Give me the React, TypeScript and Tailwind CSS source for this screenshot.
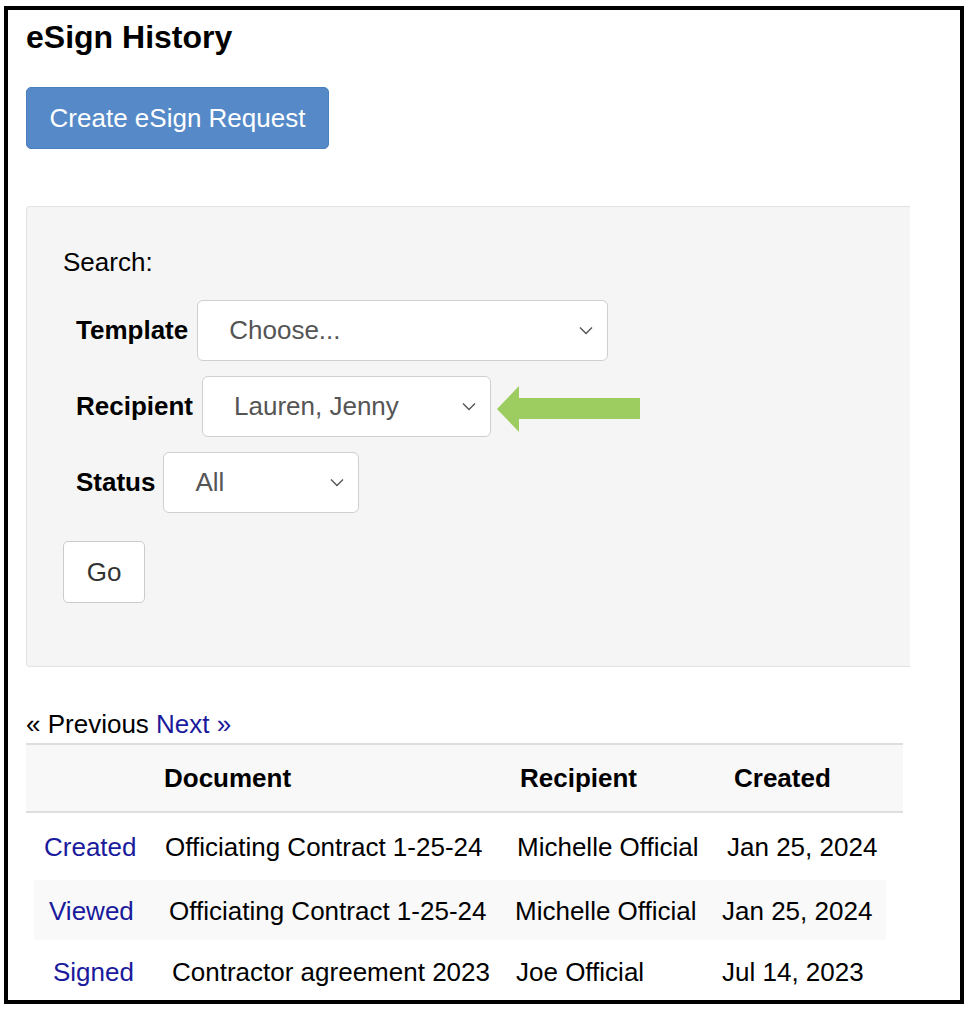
import React from "react";

const font = "font-['Liberation_Sans',Arial,Helvetica,sans-serif]";

function Chevron() {
  return (
    <svg width="14" height="9" viewBox="0 0 14 9" className="shrink-0">
      <polyline points="1,1.5 7,7.5 13,1.5" fill="none" stroke="#555" strokeWidth="1.4" />
    </svg>
  );
}

function FakeSelect({ value, className }: { value: string; className: string }) {
  return (
    <div
      className={`flex h-[61px] items-center justify-between rounded-[6px] border border-[#cfcfcf] bg-white pl-[31px] pr-[14px] text-[26px] text-[#555] ${className}`}
    >
      <span>{value}</span>
      <Chevron />
    </div>
  );
}

function GreenArrow() {
  return (
    <svg
      width="146"
      height="46"
      viewBox="0 0 146 46"
      className="absolute left-[421px] top-[10px]"
    >
      <polygon points="0,23 22,0 22,12 143,12 143,33 22,33 22,46" fill="#9dcd60" />
    </svg>
  );
}

const rows = [
  {
    status: "Created",
    doc: "Officiating Contract 1-25-24",
    who: "Michelle Official",
    date: "Jan 25, 2024",
    cls: "h-[67px] pt-[2px] pl-[18px] grid-cols-[121px_352px_210px_auto]",
  },
  {
    status: "Viewed",
    doc: "Officiating Contract 1-25-24",
    who: "Michelle Official",
    date: "Jan 25, 2024",
    cls: "h-[60px] pt-[2px] ml-[8px] w-[852px] bg-[#f9f9f9] pl-[15px] grid-cols-[120px_346px_207px_auto]",
  },
  {
    status: "Signed",
    doc: "Contractor agreement 2023",
    who: "Joe Official",
    date: "Jul 14, 2023",
    cls: "h-[60px] pt-[5px] pl-[27px] grid-cols-[119px_344px_206px_auto]",
  },
];

export default function App() {
  return (
    <div className={`${font} min-h-[1010px] bg-white pl-[4px] pt-[6px] text-black`}>
      <div className="h-[998px] w-[960px] overflow-hidden border-[4px] border-black pl-[18px]">
        <h1 className="mt-[8px] text-[32px] font-bold leading-[38px]">eSign History</h1>

        <button className="mt-[31px] h-[62px] w-[303px] rounded-[5px] border border-[#4a7fbd] bg-[#5589c8] text-[26px] text-white">
          Create eSign Request
        </button>

        {/* search panel */}
        <div className="mt-[57px] h-[461px] w-[884px] rounded-l-[4px] border border-r-0 border-[#e3e3e3] bg-[#f5f5f5] pl-[36px] pt-[40px]">
          <div className="text-[26px] leading-[30px]">Search:</div>

          <div className="mt-[23px] flex flex-col gap-[15px] pl-[13px]">
            <div className="flex items-center gap-[9px]">
              <span className="text-[26px] font-bold">Template</span>
              <FakeSelect value="Choose..." className="w-[411px]" />
            </div>
            <div className="relative flex items-center gap-[9px]">
              <span className="text-[26px] font-bold">Recipient</span>
              <FakeSelect value="Lauren, Jenny" className="w-[289px]" />
              <GreenArrow />
            </div>
            <div className="flex items-center gap-[8px]">
              <span className="text-[26px] font-bold">Status</span>
              <FakeSelect value="All" className="w-[196px]" />
            </div>
          </div>

          <button className="mt-[28px] h-[62px] w-[82px] rounded-[5px] border border-[#cccccc] bg-white text-[26px] text-[#333]">
            Go
          </button>
        </div>

        {/* pager */}
        <div className="mt-[42px] text-[26px] leading-[30px]">
          « Previous <span className="text-[#1a1a9c]">Next »</span>
        </div>

        {/* table */}
        <div className="mt-[4px] w-[877px]">
          <div className="grid h-[70px] grid-cols-[120px_356px_214px_auto] items-center border-y-2 border-[#dedede] bg-[#f8f8f8] pl-[18px] text-[26px] font-bold">
            <span />
            <span>Document</span>
            <span>Recipient</span>
            <span>Created</span>
          </div>
          {rows.map((r) => (
            <div key={r.status} className={`grid items-center text-[26px] ${r.cls}`}>
              <span className="text-[#1a1a9c]">{r.status}</span>
              <span>{r.doc}</span>
              <span>{r.who}</span>
              <span>{r.date}</span>
            </div>
          ))}
        </div>
      </div>
    </div>
  );
}
